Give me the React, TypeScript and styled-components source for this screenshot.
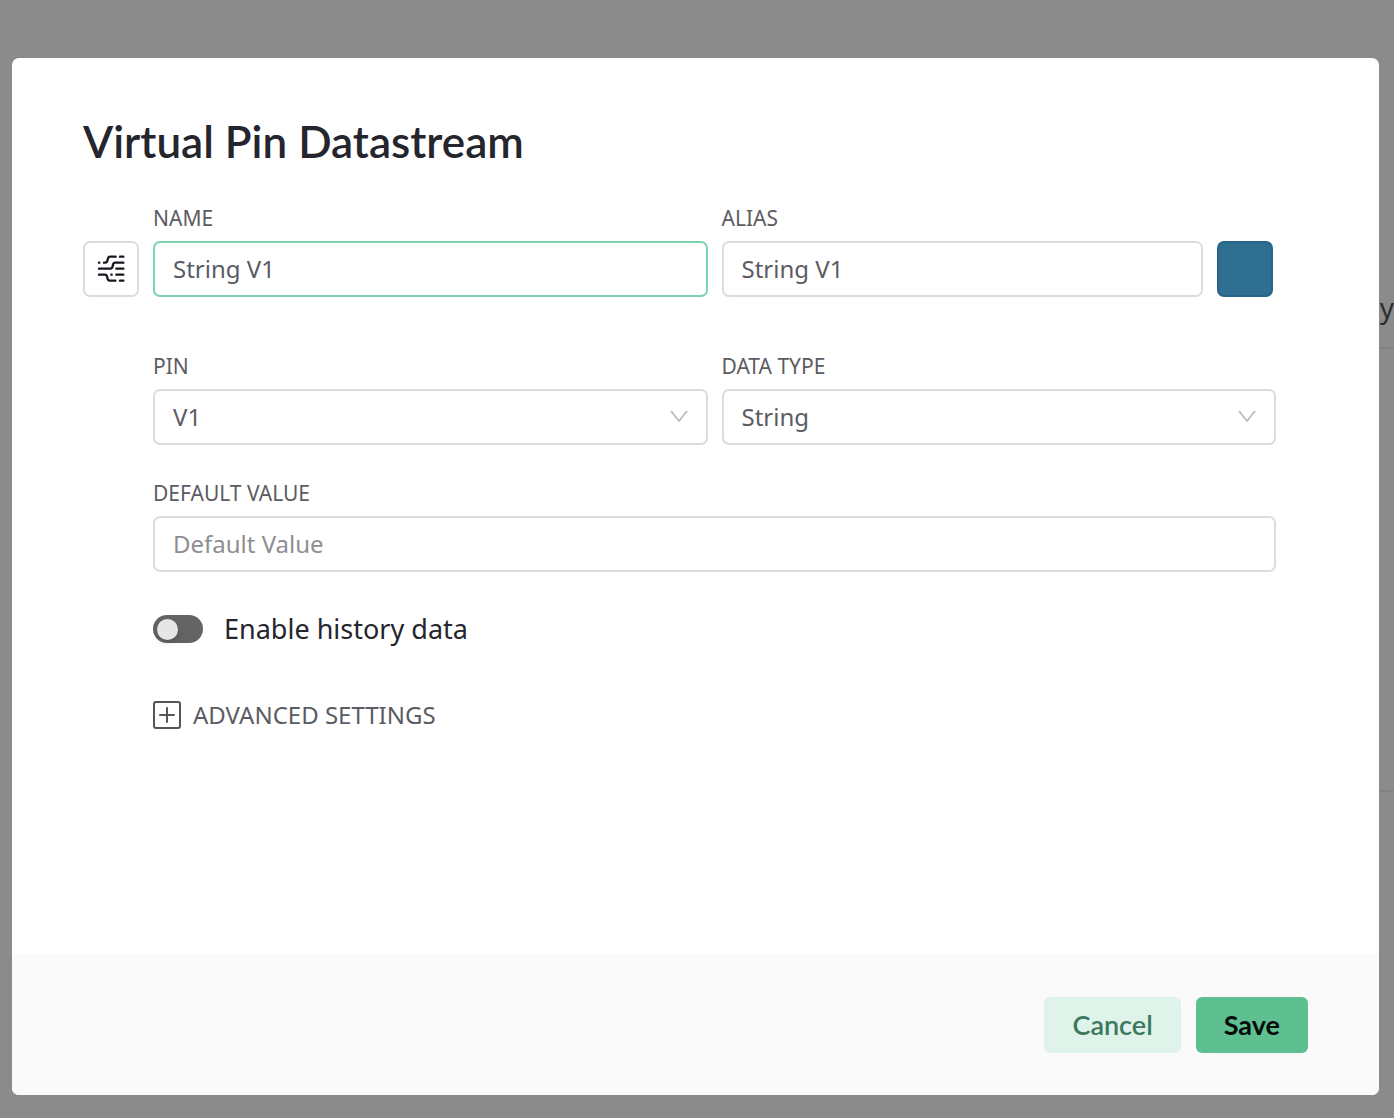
import React, { useState } from "react";
import styled, { createGlobalStyle } from "styled-components";

const textFont = `"Noto Sans", "Open Sans", sans-serif`;
const headingFont = `Lato, "Open Sans", sans-serif`;

const GlobalStyle = createGlobalStyle`
  *, *::before, *::after { box-sizing: border-box; }
  body {
    margin: 0;
    background: #8b8b8b;
    color: #24252d;
    font-family: ${textFont};
  }
`;

const Screen = styled.div`
  position: relative;
  display: flex;
  min-height: 100vh;
  padding: 58px 15px 23px 12px;
  background: #8b8b8b;
  overflow: hidden;
`;

const PageBehind = styled.div`
  position: absolute;
  inset: 0 0 0 50%;
`;

const BehindRow = styled.div<{ $height: number }>`
  display: flex;
  align-items: flex-end;
  justify-content: flex-end;
  height: ${(p) => p.$height}px;
  padding-bottom: 20px;
  border-bottom: 2px solid #838383;
  font-size: 28px;
  line-height: 40px;
  color: #2c2d31;
`;

const Dialog = styled.form`
  position: relative;
  display: flex;
  flex: 1;
  flex-direction: column;
  border-radius: 7px;
  background: #fff;
  overflow: hidden;
`;

const DialogBody = styled.div`
  flex: 1;
  padding: 55px 103px 56px 71px;
`;

const Title = styled.h1`
  margin: 0 0 34px;
  font-family: ${headingFont};
  font-size: 44px;
  font-weight: 600;
  line-height: 56px;
`;

const FieldRow = styled.div`
  display: flex;
  align-items: flex-end;
  gap: 14px;
`;

const Columns = styled.div`
  display: grid;
  flex: 1;
  grid-template-columns: 1fr 1fr;
  gap: 14px;
`;

const Indented = styled.div`
  padding-left: 70px;
`;

const Section = styled.div<{ $gap: number }>`
  display: flex;
  margin-top: ${(p) => p.$gap}px;
`;

const AliasGroup = styled.div`
  display: flex;
  align-items: flex-end;
  gap: 14px;
  padding-right: 3px;
`;

const Field = styled.div`
  display: flex;
  flex: 1;
  min-width: 0;
  flex-direction: column;
  gap: 8px;
`;

const Label = styled.label`
  color: #5b5c63;
  font-size: 21px;
  line-height: 30px;
  text-transform: uppercase;
`;

const TextInput = styled.input<{ $active?: boolean }>`
  width: 100%;
  height: 56px;
  padding: 0 18px 2px;
  border: 2px solid ${(p) => (p.$active ? "#7dd3ae" : "#dcdcdc")};
  border-radius: 7px;
  outline: none;
  background: #fff;
  color: #5b5c63;
  font-family: ${textFont};
  font-size: 24px;
  &::placeholder { color: #8e8e92; opacity: 1; }
`;

const SelectBox = styled.div`
  position: relative;
  svg {
    position: absolute;
    top: 20px;
    right: 19px;
    pointer-events: none;
  }
`;

const Select = styled.select`
  display: block;
  width: 100%;
  height: 56px;
  padding: 0 48px 2px 18px;
  border: 2px solid #dcdcdc;
  border-radius: 7px;
  appearance: none;
  outline: none;
  background: #fff;
  color: #5b5c63;
  font-family: ${textFont};
  font-size: 24px;
`;

const SquareButton = styled.button<{ $fill: string; $edge: string }>`
  display: flex;
  flex: none;
  align-items: center;
  justify-content: center;
  width: 56px;
  height: 56px;
  padding: 0;
  border: 2px solid ${(p) => p.$edge};
  border-radius: 7px;
  background: ${(p) => p.$fill};
  cursor: pointer;
`;

const SwitchLabel = styled.label`
  display: flex;
  align-items: center;
  gap: 21px;
  font-size: 27px;
  line-height: 40px;
`;

const Switch = styled.input`
  display: flex;
  align-items: center;
  width: 50px;
  height: 28px;
  margin: 0;
  padding: 0 4px;
  border-radius: 14px;
  appearance: none;
  background: #646465;
  &::before {
    content: "";
    width: 21px;
    height: 21px;
    border-radius: 50%;
    background: #e6e6e6;
    box-shadow: 0 3px 6px rgba(0, 0, 0, 0.15);
  }
  &:checked {
    justify-content: flex-end;
    background: #5ec091;
  }
`;

const AdvancedToggle = styled.button`
  display: flex;
  align-items: center;
  gap: 12px;
  padding: 0;
  border: 0;
  background: none;
  color: #5b5c63;
  font-family: ${textFont};
  font-size: 24px;
  line-height: 36px;
  text-transform: uppercase;
  cursor: pointer;
`;

const DialogFooter = styled.footer`
  display: flex;
  justify-content: flex-end;
  gap: 15px;
  padding: 43px 71px 42px;
  background: #fafafa;
`;

const ActionButton = styled.button<{ $primary?: boolean }>`
  height: 56px;
  padding: 0 28px 2px;
  border: 0;
  border-radius: 6px;
  background: ${(p) => (p.$primary ? "#5ec091" : "#e0f3ea")};
  color: ${(p) => (p.$primary ? "#060b09" : "#3c795c")};
  font-family: ${headingFont};
  font-size: 27px;
  font-weight: ${(p) => (p.$primary ? 700 : 600)};
  cursor: pointer;
`;

const StreamIcon = () => (
  <svg width="28" height="28" viewBox="51 62 84 84" fill="none" stroke="#17181f" strokeWidth="7" strokeLinecap="round" strokeLinejoin="round" aria-hidden="true">
    <path d="M57 85h1M72 85h4c11 0 3-18 14-18h17M120 67h10" />
    <path d="M57 103h34c12 0 3-18 14-18h25M109 103h21" />
    <path d="M57 121h18c11 0 3 18 14 18h17M120 139h10M94 121h1M109 121h21" />
  </svg>
);

const Chevron = () => (
  <svg width="20" height="16" viewBox="0 0 20 16" fill="none" stroke="#bfbfbf" strokeWidth="2" aria-hidden="true">
    <path d="M2 2l8 10 8-10" />
  </svg>
);

const PlusSquare = () => (
  <svg width="28" height="28" viewBox="0 0 28 28" fill="none" stroke="#55565c" strokeWidth="2" strokeLinecap="round" aria-hidden="true">
    <rect x="1" y="1" width="26" height="26" rx="2" />
    <path d="M7 14h14M14 7v14" />
  </svg>
);

export default function App() {
  const [name, setName] = useState("String V1");
  const [alias, setAlias] = useState("String V1");
  return (
    <>
      <GlobalStyle />
      <Screen>
        <PageBehind aria-hidden="true">
          <BehindRow $height={349}>y</BehindRow>
          <BehindRow $height={443} />
        </PageBehind>
        <Dialog role="dialog" aria-labelledby="dialog-title" onSubmit={(e) => e.preventDefault()}>
          <DialogBody>
            <Title id="dialog-title">Virtual Pin Datastream</Title>
            <FieldRow>
              <SquareButton type="button" $fill="#fff" $edge="#dcdcdc" aria-label="Icon">
                <StreamIcon />
              </SquareButton>
              <Columns>
                <Field>
                  <Label htmlFor="name">Name</Label>
                  <TextInput id="name" $active value={name} onChange={(e) => setName(e.target.value)} />
                </Field>
                <AliasGroup>
                  <Field>
                    <Label htmlFor="alias">Alias</Label>
                    <TextInput id="alias" value={alias} onChange={(e) => setAlias(e.target.value)} />
                  </Field>
                  <SquareButton type="button" $fill="#2f6f91" $edge="#27658a" aria-label="Color" />
                </AliasGroup>
              </Columns>
            </FieldRow>
            <Indented>
              <Section $gap={54}>
                <Columns>
                  <Field>
                    <Label htmlFor="pin">Pin</Label>
                    <SelectBox>
                      <Select id="pin" defaultValue="V1">
                        <option>V1</option>
                      </Select>
                      <Chevron />
                    </SelectBox>
                  </Field>
                  <Field>
                    <Label htmlFor="type">Data type</Label>
                    <SelectBox>
                      <Select id="type" defaultValue="String">
                        <option>String</option>
                      </Select>
                      <Chevron />
                    </SelectBox>
                  </Field>
                </Columns>
              </Section>
              <Section $gap={33}>
                <Field>
                  <Label htmlFor="default">Default value</Label>
                  <TextInput id="default" placeholder="Default Value" />
                </Field>
              </Section>
              <Section $gap={37}>
                <SwitchLabel>
                  <Switch type="checkbox" role="switch" />
                  Enable history data
                </SwitchLabel>
              </Section>
              <Section $gap={48}>
                <AdvancedToggle type="button">
                  <PlusSquare />
                  Advanced settings
                </AdvancedToggle>
              </Section>
            </Indented>
          </DialogBody>
          <DialogFooter>
            <ActionButton type="button">Cancel</ActionButton>
            <ActionButton type="submit" $primary>Save</ActionButton>
          </DialogFooter>
        </Dialog>
      </Screen>
    </>
  );
}
